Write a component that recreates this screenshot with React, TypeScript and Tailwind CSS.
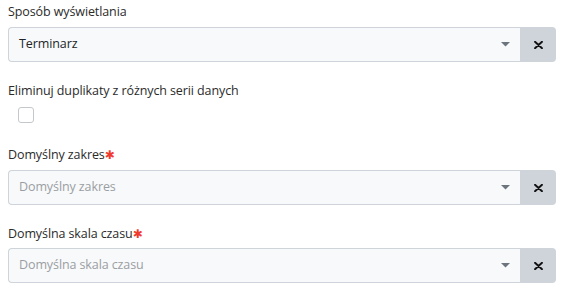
import React from 'react';

function Caret() {
  return (
    <svg width="9" height="5" viewBox="0 0 9 5" className="text-[#6c757d]">
      <path d="M0 0 L9 0 L4.5 4.5 Z" fill="currentColor" />
    </svg>
  );
}

function ClearIcon() {
  return (
    <svg width="9" height="8" viewBox="0 0 9 8">
      <path d="M1 0.8 L8 7.2 M8 0.8 L1 7.2" stroke="#111" strokeWidth="1.9" strokeLinecap="round" />
    </svg>
  );
}

function Select({ value, placeholder }: { value?: string; placeholder: string }) {
  return (
    <div className="flex h-[35px] w-full">
      <div className="flex flex-1 items-center justify-between rounded-l-[4px] border border-r-0 border-[#ced4da] bg-[#f8f9fa] pl-[10px] pr-[10px]">
        <span className={value ? 'text-[#212529]' : 'text-[#9a9ea3]'}>{value ?? placeholder}</span>
        <Caret />
      </div>
      <button className="flex w-[36px] items-center justify-center rounded-r-[4px] bg-[#ced4da]">
        <ClearIcon />
      </button>
    </div>
  );
}

function Label({ text, required }: { text: string; required?: boolean }) {
  return (
    <div className="h-[18px] leading-[18px] text-[#2b2b2b]">
      {text}
      {required && <span className="font-['DejaVu_Sans',sans-serif] text-[12px] text-[#f03a2e]">✱</span>}
    </div>
  );
}

export default function App() {
  return (
    <div className="w-[564px] bg-white px-2 pt-[3px] font-['Open_Sans',sans-serif] text-[12.5px] tracking-[-0.1px]">
      <Label text="Sposób wyświetlania" />
      <div className="mt-[6px]">
        <Select value="Terminarz" placeholder="" />
      </div>
      <div className="mt-[20px]">
        <Label text="Eliminuj duplikaty z różnych serii danych" />
      </div>
      <div className="mt-[7px] pl-[10px]">
        <div className="h-[16px] w-[16px] rounded-[3px] border border-[#c4c8cc] bg-white" />
      </div>
      <div className="mt-[23px]">
        <Label text="Domyślny zakres" required />
      </div>
      <div className="mt-[6px]">
        <Select placeholder="Domyślny zakres" />
      </div>
      <div className="mt-[20px]">
        <Label text="Domyślna skala czasu" required />
      </div>
      <div className="mt-[5px]">
        <Select placeholder="Domyślna skala czasu" />
      </div>
    </div>
  );
}
